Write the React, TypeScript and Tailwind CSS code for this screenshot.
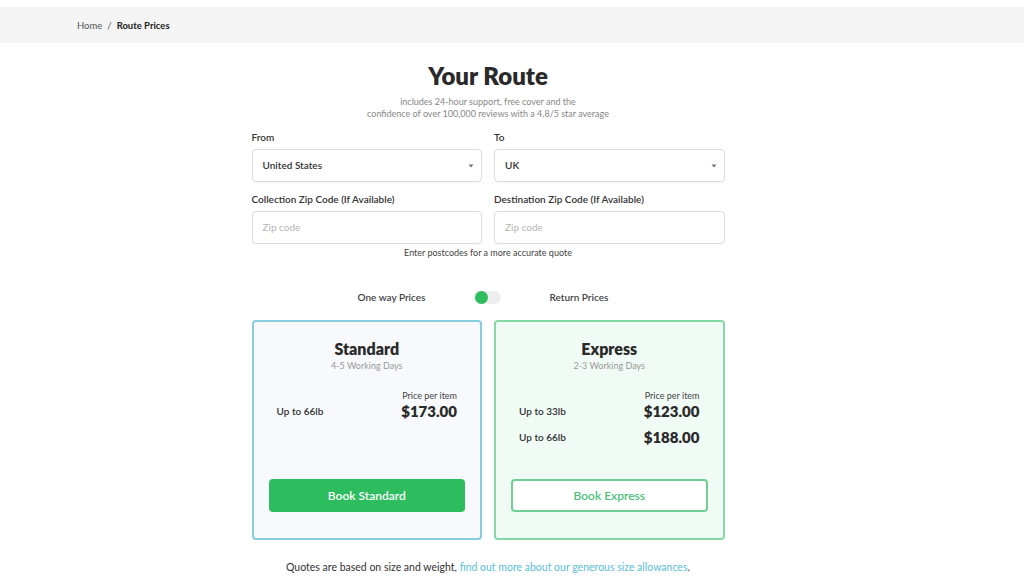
const font = { fontFamily: "Lato, 'Noto Sans', sans-serif" }

const Caret = () => (
    <svg width="6" height="4" viewBox="0 0 6 4" className="text-gray-500">
        <path d="M0.5 0.5 L3 3.5 L5.5 0.5 Z" fill="currentColor" />
    </svg>
)

const Field = ({ label, value, placeholder, select }: { label: string; value?: string; placeholder?: string; select?: boolean }) => {
    return (
        <div className="flex flex-col flex-1">
            <p className="text-[10px] leading-[12px] text-[#333] font-semibold">{label}</p>
            <div className="mt-[6px] h-[33px] border border-[#dcdcdc] rounded-[4px] bg-white flex items-center justify-between pl-[10px] pr-[7px] shadow-[0_1px_2px_rgba(0,0,0,0.04)]">
                {value ? (
                    <span className="text-[10px] text-[#333] font-semibold">{value}</span>
                ) : (
                    <span className="text-[10px] text-[#b5b5b5]">{placeholder}</span>
                )}
                {select && <Caret />}
            </div>
        </div>
    )
}

const PriceRow = ({ label, price }: { label: string; price: string }) => (
    <div className="flex items-center justify-between">
        <span className="text-[10px] text-[#333] font-semibold">{label}</span>
        <span className="text-[15px] leading-[17px] font-extrabold text-[#2a2a2a]">{price}</span>
    </div>
)

const Card = ({
    title,
    days,
    rows,
    express,
}: {
    title: string
    days: string
    rows: { label: string; price: string }[]
    express?: boolean
}) => {
    return (
        <div
            className={
                express
                    ? "flex-1 h-[220px] rounded-[4px] border-2 border-[#86d8a6] bg-[#f1fbf5] flex flex-col px-[15px]"
                    : "flex-1 h-[220px] rounded-[4px] border-2 border-[#86cde0] bg-[#f7f9fc] flex flex-col px-[15px]"
            }
        >
            <div className="text-center mt-[17px]">
                <p className="text-[16px] leading-[19px] font-extrabold text-[#2a2a2a]">{title}</p>
                <p className="text-[9px] leading-[12px] text-[#999] mt-[2px]">{days}</p>
            </div>
            <div className="px-[8px] mt-[18px] flex flex-col">
                <p className="text-right text-[9px] leading-[11px] text-[#444]">Price per item</p>
                <div className="flex flex-col gap-[9px] mt-[2px]">
                    {rows.map((r) => (
                        <PriceRow key={r.label} label={r.label} price={r.price} />
                    ))}
                </div>
            </div>
            <div className="mt-auto mb-[26px]">
                {express ? (
                    <button className="w-full h-[33px] rounded-[4px] border-2 border-[#6fcf94] bg-white text-[#4cc27a] text-[12px] font-semibold">
                        Book Express
                    </button>
                ) : (
                    <button className="w-full h-[33px] rounded-[4px] bg-[#2dbd5f] text-white text-[12px] font-semibold">
                        Book Standard
                    </button>
                )}
            </div>
        </div>
    )
}

const App = () => {
    return (
        <div className="w-[1024px] h-[576px] bg-white overflow-hidden" style={font}>
            <div className="pt-[7px]">
                <div className="h-[36px] bg-[#f4f4f4] flex items-center pl-[77px] text-[9.5px] pt-[2px]">
                    <span className="text-[#555]">Home</span>
                    <span className="text-[#555] mx-[5px]">/</span>
                    <span className="text-[#222] font-bold">Route Prices</span>
                </div>
            </div>
            <div className="w-[976px]">
                <div className="w-[473px] mx-auto flex flex-col">
                    <h1 className="text-center text-[24px] leading-[30px] font-extrabold text-[#2a2a2a] mt-[18px]">Your Route</h1>
                    <div className="text-center text-[9px] leading-[12px] text-[#888] mt-[5px]">
                        <p>includes 24-hour support, free cover and the</p>
                        <p>confidence of over 100,000 reviews with a 4.8/5 star average</p>
                    </div>
                    <div className="flex gap-[12px] mt-[11px]">
                        <Field label="From" value="United States" select />
                        <Field label="To" value="UK" select />
                    </div>
                    <div className="flex gap-[12px] mt-[11px]">
                        <Field label="Collection Zip Code (If Available)" placeholder="Zip code" />
                        <Field label="Destination Zip Code (If Available)" placeholder="Zip code" />
                    </div>
                    <p className="text-center text-[9px] leading-[12px] text-[#444] mt-[3px]">Enter postcodes for a more accurate quote</p>
                    <div className="flex items-center mt-[32px] h-[12px]">
                        <span className="text-[10px] text-[#444] font-semibold ml-[106px]">One way Prices</span>
                        <div className="ml-[48px] w-[28px] h-[13px] rounded-full bg-[#eeeeee] flex items-center pl-[2px]">
                            <div className="w-[13px] h-[13px] rounded-full bg-[#2dbd5f]"></div>
                        </div>
                        <span className="text-[10px] text-[#444] font-semibold ml-[48px]">Return Prices</span>
                    </div>
                    <div className="flex gap-[12px] mt-[17px]">
                        <Card title="Standard" days="4-5 Working Days" rows={[{ label: "Up to 66lb", price: "$173.00" }]} />
                        <Card
                            title="Express"
                            days="2-3 Working Days"
                            rows={[
                                { label: "Up to 33lb", price: "$123.00" },
                                { label: "Up to 66lb", price: "$188.00" },
                            ]}
                            express
                        />
                    </div>
                    <p className="text-center text-[10.5px] leading-[12px] text-[#333] mt-[21px] whitespace-nowrap">
                        Quotes are based on size and weight, <span className="text-[#5bbdd8]">find out more about our generous size allowances</span>.
                    </p>
                </div>
            </div>
        </div>
    )
}

export default App
